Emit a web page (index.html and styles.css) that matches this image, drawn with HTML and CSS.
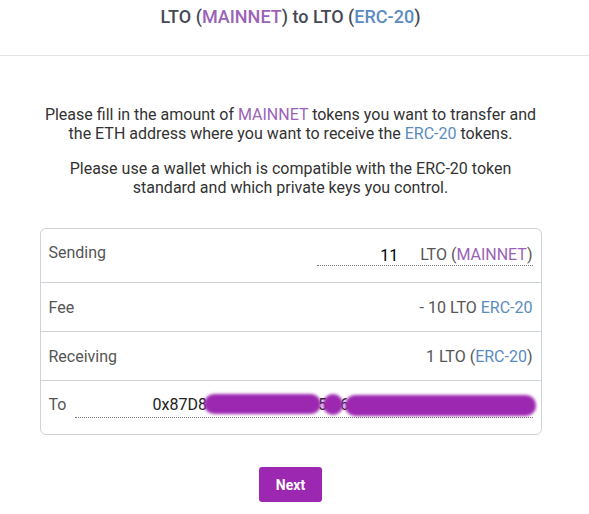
FILE: index.html
```html
<!DOCTYPE html>
<html lang="en">
<head>
    <meta charset="UTF-8">
    <meta name="viewport" content="width=device-width, initial-scale=1.0">
    <title>Swap LTO</title>
    <link rel="stylesheet" href="styles.css">
</head>
<body>
    <div class="header">
        <h1>LTO (<span class="mainnet">MAINNET</span>) to LTO (<span class="erc">ERC-20</span>)</h1>
    </div>

    <div class="content">
        <p>Please fill in the amount of <span class="mainnet">MAINNET</span> tokens you want to transfer and<br>the ETH address where you want to receive the <span class="erc">ERC-20</span> tokens.</p>
        <p>Please use a wallet which is compatible with the ERC-20 token<br>standard and which private keys you control.</p>

        <div class="card">
            <div class="row row-input">
                <label for="amount">Sending</label>
                <div class="amount-field">
                    <input type="text" id="amount" value="11">
                    <span class="suffix">LTO (<span class="mainnet">MAINNET</span>)</span>
                </div>
            </div>
            <div class="row">
                <span>Fee</span>
                <span class="value">- 10 LTO <span class="erc">ERC-20</span></span>
            </div>
            <div class="row">
                <span>Receiving</span>
                <span class="value">1 LTO (<span class="erc">ERC-20</span>)</span>
            </div>
            <div class="row row-input">
                <label>To</label>
                <!-- address is redacted with blots -->
                <div class="address-field">
                    <span>0x87D8</span>
                    <span class="blot blot-1"></span>
                    <span>5</span>
                    <span class="blot blot-2"></span>
                    <span>6</span>
                    <span class="blot blot-3"></span>
                </div>
            </div>
        </div>

        <div class="actions">
            <button type="button">Next</button>
        </div>
    </div>
</body>
</html>
```

FILE: styles.css
```css
body {
    font-family: Roboto, "Liberation Sans", sans-serif;
    color: #444;
    background-color: #fff;
    margin: 0;
    padding: 0;
}
.header {
    height: 55px;
    border-bottom: 1px solid #e3e3e3;
    padding-right: 8px;
}
.header h1 {
    margin: 0;
    padding-top: 6px;
    font-size: 18px;
    font-weight: 500;
    text-align: center;
    color: #444a55;
}
.mainnet {
    color: #9b63b8;
}
.erc {
    color: #5a8cc2;
}
.content {
    padding: 0 8px 0 0;
}
.content p {
    width: 500px;
    margin: 50px auto 0;
    font-size: 16px;
    line-height: 18.5px;
    text-align: center;
    color: #333;
}
.content p + p {
    margin-top: 17px;
}
.card {
    width: 500px;
    margin: 31px auto 0;
    border: 1px solid #cdd3d8;
    border-radius: 6px;
    font-size: 16px;
    color: #555;
}
.row {
    display: flex;
    justify-content: space-between;
    align-items: center;
    height: 48px;
    padding: 0 8px;
    border-top: 1px solid #cdd3d8;
}
.row:first-child {
    border-top: none;
}
.row-input {
    height: 53px;
    align-items: flex-start;
}
.row-input label {
    padding-top: 14px;
}
.amount-field {
    display: flex;
    align-items: flex-end;
    width: 216px;
    margin-top: 11px;
    border-bottom: 1px dotted #777;
    height: 25px;
}
.amount-field input {
    flex: 1;
    min-width: 0;
    border: none;
    outline: none;
    font: inherit;
    color: #000;
    text-align: right;
    padding: 0 22px 0 0;
    background: transparent;
}
.amount-field .suffix {
    padding-bottom: 1px;
}
.address-field {
    display: flex;
    align-items: center;
    width: 380px;
    margin-top: 11px;
    padding-left: 78px;
    border-bottom: 1px dotted #777;
    height: 25px;
    color: #222;
}
.blot {
    display: block;
    background-color: #9c27b0;
    border-radius: 10px;
    filter: blur(1.5px);
}
.blot-1 {
    width: 117px;
    height: 20px;
    margin: 0 -3px 0 -3px;
    position: relative;
    top: -1px;
}
.blot-2 {
    width: 20px;
    height: 21px;
    margin: 0 -3px 0 -4px;
}
.blot-3 {
    flex: 1;
    height: 21px;
    margin: 0 -3px 0 -4px;
    position: relative;
    top: 1px;
}
.actions {
    text-align: center;
    margin-top: 32px;
}
.actions button {
    background-color: #9c27b0;
    color: white;
    border: none;
    width: 63px;
    height: 35px;
    font-family: Roboto, sans-serif;
    font-size: 14px;
    font-weight: bold;
    border-radius: 3px;
    cursor: pointer;
}
```
